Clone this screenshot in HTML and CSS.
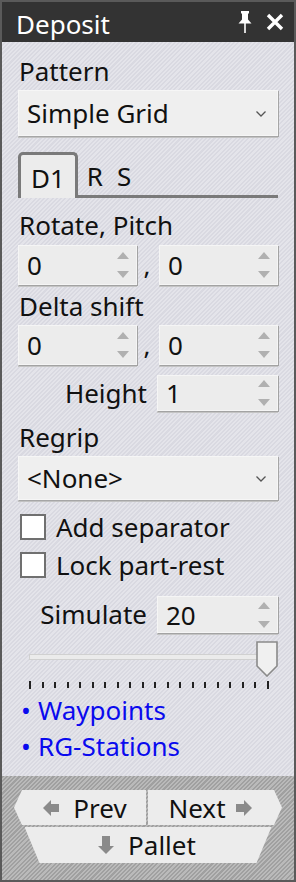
FILE: index.html
```html
<!DOCTYPE html>
<html>
<head>
<meta charset="utf-8">
<link rel="stylesheet" href="styles.css">
</head>
<body>
<div class="window">
  <header class="titlebar">
    <span class="title">Deposit</span>
    <span class="title-icons">
      <svg class="pin" width="14" height="22" viewBox="0 0 14 22"><path d="M3 0H11V2.5H10V8.5L13.5 12.5H0.5L4 8.5V2.5H3Z" fill="#fff"/><rect x="6.2" y="12" width="1.6" height="10" fill="#fff"/></svg>
      <svg class="close" width="18" height="18" viewBox="0 0 18 18"><path d="M2 2L16 16M16 2L2 16" stroke="#fff" stroke-width="3.4"/></svg>
    </span>
  </header>

  <main class="content">
    <div class="label mt-pattern">Pattern</div>
    <div class="combo combo-pattern">
      <span>Simple Grid</span>
      <svg class="chev" width="10" height="6" viewBox="0 0 10 6"><path d="M0.5 0.5L5 5L9.5 0.5" fill="none" stroke="#555" stroke-width="1.3"/></svg>
    </div>

    <div class="tabs">
      <span class="tab active">D1</span>
      <span class="tab">R</span>
      <span class="tab">S</span>
    </div>

    <div class="label mt-rotate">Rotate, Pitch</div>
    <div class="pair mt-pair1">
      <div class="spin"><span>0</span><svg class="arrows" width="12" height="26" viewBox="0 0 12 26"><path d="M0 7L6 0L12 7Z M0 19L12 19L6 26Z" fill="#b0b0b0"/></svg></div>
      <span class="comma">,</span>
      <div class="spin"><span>0</span><svg class="arrows" width="12" height="26" viewBox="0 0 12 26"><path d="M0 7L6 0L12 7Z M0 19L12 19L6 26Z" fill="#b0b0b0"/></svg></div>
    </div>

    <div class="label mt-delta">Delta shift</div>
    <div class="pair mt-pair2">
      <div class="spin"><span>0</span><svg class="arrows" width="12" height="26" viewBox="0 0 12 26"><path d="M0 7L6 0L12 7Z M0 19L12 19L6 26Z" fill="#b0b0b0"/></svg></div>
      <span class="comma">,</span>
      <div class="spin"><span>0</span><svg class="arrows" width="12" height="26" viewBox="0 0 12 26"><path d="M0 7L6 0L12 7Z M0 19L12 19L6 26Z" fill="#b0b0b0"/></svg></div>
    </div>

    <div class="field mt-height">
      <span class="field-label">Height</span>
      <div class="spin"><span>1</span><svg class="arrows" width="12" height="26" viewBox="0 0 12 26"><path d="M0 7L6 0L12 7Z M0 19L12 19L6 26Z" fill="#b0b0b0"/></svg></div>
    </div>

    <div class="label mt-regrip">Regrip</div>
    <div class="combo combo-regrip">
      <span>&lt;None&gt;</span>
      <svg class="chev" width="10" height="6" viewBox="0 0 10 6"><path d="M0.5 0.5L5 5L9.5 0.5" fill="none" stroke="#555" stroke-width="1.3"/></svg>
    </div>

    <label class="check mt-check1"><span class="box"></span><span>Add separator</span></label>
    <label class="check mt-check2"><span class="box"></span><span>Lock part-rest</span></label>

    <div class="field mt-sim">
      <span class="field-label">Simulate</span>
      <div class="spin"><span>20</span><svg class="arrows" width="12" height="26" viewBox="0 0 12 26"><path d="M0 7L6 0L12 7Z M0 19L12 19L6 26Z" fill="#b0b0b0"/></svg></div>
    </div>

    <div class="slider">
      <div class="track-row">
        <div class="track"></div>
        <svg class="thumb" width="22" height="36" viewBox="0 0 22 36"><path d="M1 1H21V25L11 35L1 25Z" fill="#f0f0f0" stroke="#8a8a8a" stroke-width="1.6"/></svg>
      </div>
      <div class="ticks">
        <i class="long"></i><i></i><i></i><i></i><i></i><i></i><i></i><i></i><i></i><i></i><i></i><i></i><i></i><i></i><i></i><i></i><i></i><i></i><i></i><i class="long"></i>
      </div>
    </div>

    <ul class="links">
      <li>Waypoints</li>
      <li>RG-Stations</li>
    </ul>
  </main>

  <footer class="nav">
    <div class="nav-row">
      <div class="btn btn-prev"><svg class="ico" width="16" height="16" viewBox="0 0 16 16"><path d="M0 8L8 0V4H16V12H8V16Z" fill="#8a8a8a"/></svg><span>Prev</span></div>
      <div class="btn btn-next"><span>Next</span><svg class="ico" width="16" height="16" viewBox="0 0 16 16"><path d="M16 8L8 0V4H0V12H8V16Z" fill="#8a8a8a"/></svg></div>
    </div>
    <div class="btn btn-pallet"><svg class="ico" width="16" height="18" viewBox="0 0 16 18"><path d="M8 18L0 10H4V0H12V10H16Z" fill="#8a8a8a"/></svg><span>Pallet</span></div>
  </footer>
</div>
</body>
</html>
```

FILE: styles.css
```css
* { box-sizing: border-box; }

html, body {
  margin: 0;
  padding: 0;
}

body {
  font-family: "Noto Sans", "Open Sans", sans-serif;
  font-size: 26px;
  color: #111;
}

.window {
  width: 296px;
  height: 882px;
  border: 2px solid #5a5a5a;
  display: flex;
  flex-direction: column;
  background: repeating-linear-gradient(135deg, #d9d9e1 0 1.5px, #e4e4ea 1.5px 3px);
}

.titlebar {
  height: 40px;
  background: #333333;
  display: flex;
  align-items: center;
  justify-content: space-between;
  padding: 0 10px 0 14px;
  flex: none;
}

.title {
  color: #fff;
  font-size: 26px;
  line-height: 40px;
  padding-top: 3px;
}

.title-icons {
  display: flex;
  align-items: center;
  gap: 14px;
}

.content {
  flex: 1;
  padding: 0 16px;
  display: flex;
  flex-direction: column;
}

.label {
  line-height: 28px;
  height: 28px;
  padding-left: 1px;
}

.mt-pattern { margin-top: 15px; }
.mt-rotate { margin-top: 13px; }
.mt-delta { margin-top: 11px; }
.mt-regrip { margin-top: 12px; }

.combo {
  display: flex;
  align-items: center;
  justify-content: space-between;
  background: #efefef;
  border: 1px solid #f6f6f6;
  box-shadow: 1px 1px 0 #a6a6a6, 0 2px 0 #c2c2c2;
  padding: 0 11px 0 8px;
  line-height: 30px;
}

.combo-pattern { margin-top: 5px; height: 46px; }
.combo-regrip { margin-top: 5px; height: 44px; }

.chev { margin-top: 2px; flex: none; }

.tabs {
  margin-top: 16px;
  height: 46px;
  border-bottom: 3px solid #7a7a7a;
  display: flex;
  align-items: flex-end;
}

.tab {
  line-height: 34px;
  padding: 0 7px 2px 7px;
}

.tab.active {
  height: 46px;
  margin-bottom: -3px;
  border: 3px solid #7a7a7a;
  border-bottom: none;
  border-radius: 5px 5px 0 0;
  background: #ececec;
  padding: 6px 10px 0 10px;
  margin-right: 2px;
}

.pair {
  display: grid;
  grid-template-columns: 119px 22px 119px;
  height: 36px;
}

.mt-pair1 { margin-top: 6px; }
.mt-pair2 { margin-top: 5px; height: 37px; }

.spin {
  display: flex;
  align-items: center;
  justify-content: space-between;
  background: #ececec;
  border: 1px solid #f5f5f5;
  box-shadow: 1px 1px 0 #a3a3a3, 0 2px 0 #c4c4c4;
  padding: 0 7px 0 8px;
  line-height: 30px;
}

.arrows { flex: none; }

.comma {
  text-align: center;
  line-height: 40px;
  padding-right: 2px;
}

.field {
  display: grid;
  grid-template-columns: 1fr 121px;
  column-gap: 10px;
  height: 36px;
}

.field-label {
  text-align: right;
  line-height: 36px;
}

.mt-height { margin-top: 13px; }
.mt-sim { margin-top: 15px; height: 37px; }

.check {
  display: flex;
  align-items: center;
  height: 32px;
  gap: 10px;
  padding-left: 2px;
}

.mt-check1 { margin-top: 11px; }
.mt-check2 { margin-top: 6px; }

.box {
  width: 26px;
  height: 26px;
  border: 2px solid #707070;
  background: #ffffff;
  flex: none;
}

.slider {
  margin-top: 8px;
  height: 49px;
  padding: 0 0 0 11px;
}

.track-row {
  position: relative;
  height: 36px;
}

.track {
  position: absolute;
  left: 0;
  right: 14px;
  top: 13px;
  height: 6px;
  background: #ebebeb;
  border: 1px solid #d0d0d0;
}

.thumb {
  position: absolute;
  right: 0;
  top: 0;
}

.ticks {
  margin-top: 4px;
  display: flex;
  justify-content: space-between;
  align-items: flex-start;
  width: 240px;
  height: 9px;
}

.ticks i {
  display: block;
  width: 2px;
  height: 6px;
  margin-top: 1px;
  background: #222;
}

.ticks i.long {
  height: 8px;
  margin-top: 0;
}

.links {
  list-style: none;
  margin: 2px 0 0 0;
  padding: 0;
  color: #0a0aee;
  line-height: 36px;
}

.links li::before {
  content: "•";
  display: inline-block;
  width: 17px;
  padding-left: 3px;
}

.nav {
  flex: none;
  height: 104px;
  background: repeating-linear-gradient(135deg, #a0a0a0 0 1.5px, #bababa 1.5px 3px);
  padding: 14px 12px 0 12px;
  display: flex;
  flex-direction: column;
  align-items: center;
  gap: 2px;
}

.nav-row {
  display: flex;
  gap: 2px;
}

.btn {
  background: #ececec;
  display: flex;
  align-items: center;
  justify-content: center;
  line-height: 30px;
}

.ico { flex: none; }

.btn-prev {
  width: 132px;
  height: 35px;
  clip-path: polygon(8px 0, 100% 0, 100% 100%, 8px 100%, 0 50%);
  gap: 14px;
  padding-left: 10px;
}

.btn-next {
  width: 134px;
  height: 35px;
  clip-path: polygon(0 0, calc(100% - 8px) 0, 100% 50%, calc(100% - 8px) 100%, 0 100%);
  gap: 10px;
  padding-right: 10px;
}

.btn-pallet {
  width: 247px;
  height: 36px;
  clip-path: polygon(0 0, 100% 0, calc(100% - 15px) 100%, 15px 100%);
  gap: 14px;
  padding-right: 2px;
}
```
